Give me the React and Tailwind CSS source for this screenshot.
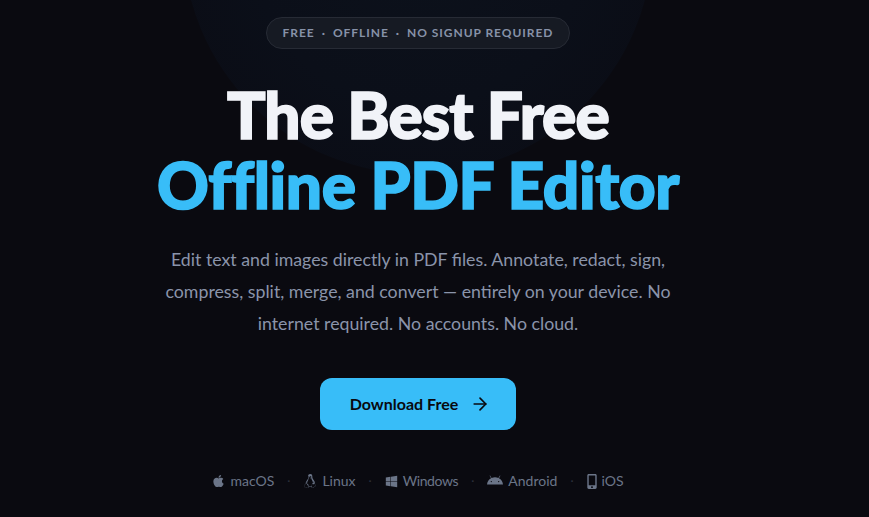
import { ArrowRight } from 'lucide-react'
import { FaApple, FaWindows, FaMobileAlt } from 'react-icons/fa'
import { FaLinux, FaAndroid } from 'react-icons/fa6'
import { Fragment } from 'react'

const platforms = [
  { name: 'macOS', icon: <FaApple className="w-[13px] h-[14px]" /> },
  { name: 'Linux', icon: <FaLinux className="w-[14px] h-[14px]" /> },
  { name: 'Windows', tight: true, icon: <FaWindows className="w-[13px] h-[13px]" /> },
  { name: 'Android', icon: <FaAndroid className="w-[16px] h-[16px]" /> },
  { name: 'iOS', icon: <FaMobileAlt className="w-[10px] h-[15px]" /> },
]

export default function App() {
  return (
    <div className="relative h-[517px] overflow-hidden bg-[#0a0a10] font-['Lato',sans-serif]">
      {/* glow behind the badge */}
      <div className="absolute left-[183px] top-[-296px] w-[470px] h-[470px] rounded-full bg-[radial-gradient(circle,#0c111b_0%,#0b0f19_50%,#0a0b13_100%)]" />

      <main className="relative flex w-[836px] flex-col items-center pt-[17px]">
        <div className="flex h-8 items-center gap-[7px] rounded-full border border-[#272b35] bg-[#161a23] px-4 text-xs font-bold tracking-[0.95px] text-[#8792a8]">
          <span>FREE</span>
          <span>·</span>
          <span>OFFLINE</span>
          <span>·</span>
          <span>NO SIGNUP REQUIRED</span>
        </div>

        <h1 className="mt-[31px] text-center whitespace-nowrap text-[64px] leading-[70px] font-black text-[#f1f3f8] [-webkit-text-stroke:1.7px_currentColor]">
          <span className="tracking-[-0.9px]">The Best Free</span>
          <br />
          <span className="tracking-[-0.4px] text-[#38bdf8]">Offline PDF Editor</span>
        </h1>

        <p className="mt-[23px] w-[540px] text-center text-[17.75px] leading-[32px] text-[#8a94aa]">
          Edit text and images directly in PDF files. Annotate, redact, sign, compress, split,
          merge, and convert — entirely on your device. No internet required. No accounts. No cloud.
        </p>

        <button className="mt-[39px] flex h-[52px] w-[196px] items-center justify-center gap-3 rounded-xl bg-[#38bdf8] pl-1 text-base font-bold text-[#09090f]">
          Download Free
          <ArrowRight className="w-5 h-5" strokeWidth={2} />
        </button>

        <div className="mt-[41px] flex items-center gap-[13px] text-sm text-[#6b7588]">
          {platforms.map((p, i) => (
            <Fragment key={p.name}>
              {i > 0 && <span className="text-xs text-[#2c303b]">·</span>}
              <span className={p.tight ? 'flex items-center gap-[5px] tracking-[-0.4px]' : 'flex items-center gap-[5px]'}>
                {p.icon}
                {p.name}
              </span>
            </Fragment>
          ))}
        </div>
      </main>
    </div>
  )
}
